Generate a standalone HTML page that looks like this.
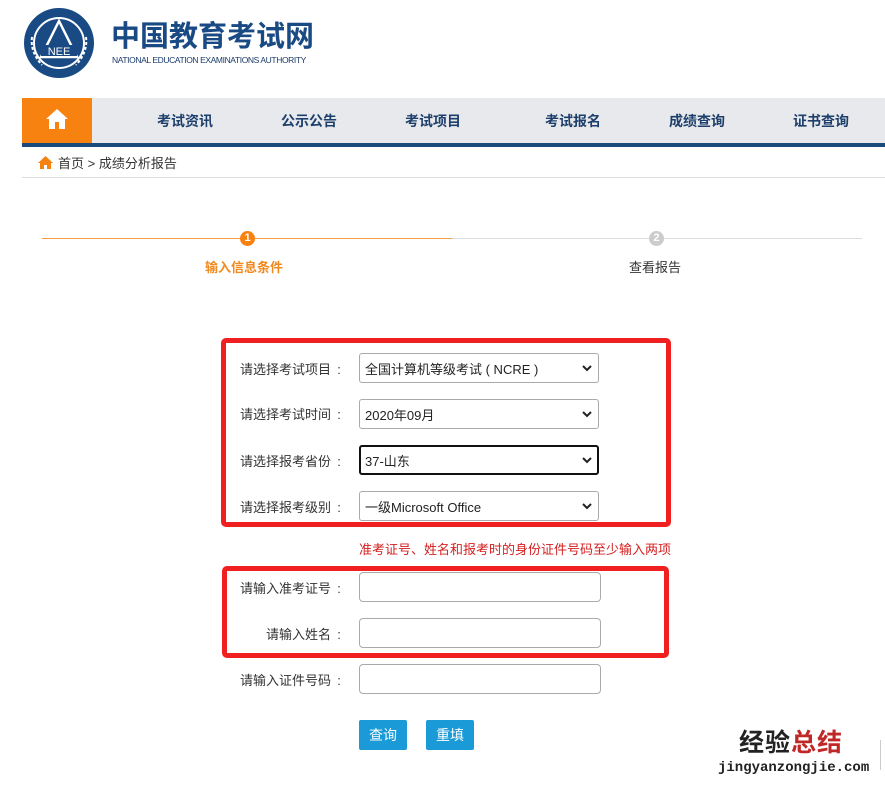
<!DOCTYPE html>
<html><head><meta charset="utf-8"><style>
body{margin:0;width:885px;height:787px;background:#fff;position:relative;overflow:hidden;font-family:"Liberation Sans","Noto Sans CJK SC",sans-serif;font-size:13px;color:#333}
.a{position:absolute}
.k{display:inline-block;width:16px;text-align:center}
.nav{left:22px;top:98px;width:863px;height:45px;background:#e8e9ec;border-bottom:4px solid #1b4a7c}
.nav span{position:absolute;top:13px;font-size:14px;font-weight:bold;color:#1d3f6c;transform:translateX(-50%)}
.lbl{position:absolute;left:200px;width:147px;text-align:right;font-size:13px;color:#333}
.sel{position:absolute;left:359px;width:238px;height:28px;border:1px solid #aaa;border-radius:3px;background:#fff;box-sizing:content-box}
.sel .t{position:absolute;left:5px;top:5px;font-size:13px;color:#222;white-space:nowrap}
.sel svg{position:absolute;right:6px;top:11px}
.inp{position:absolute;left:359px;width:240px;height:28px;border:1px solid #aaa;border-radius:4px}
.btn{position:absolute;top:720px;width:48px;height:30px;background:#1a9ad6;color:#fff;border-radius:2px;text-align:center;line-height:30px;font-size:14px}
.red{position:absolute;border:5px solid #f02020;border-radius:5px}
</style></head><body>
<svg class="a" style="left:22px;top:7px" width="74" height="72" viewBox="0 0 74 72">
<circle cx="37" cy="36" r="35" fill="#1a4a84"/><circle cx="37" cy="36" r="25" fill="none" stroke="#fff" stroke-width="2"/>
<path d="M37 14 L55 50 L19 50 Z" fill="none" stroke="#fff" stroke-width="2.5"/>
<rect x="19" y="38" width="36" height="11" fill="#1a4a84"/>
<text x="37" y="48" fill="#fff" font-size="11" text-anchor="middle" font-family="Liberation Sans">NEE</text>
<path d="M10 30 Q8 45 20 58 M64 30 Q66 45 54 58" stroke="#fff" stroke-width="2" fill="none" stroke-dasharray="3 2"/></svg>
<div class="a" style="left:111px;top:23px;font-size:29px;line-height:1;font-weight:bold;color:#1a4a84">中国教育考试网</div>
<div class="a" style="left:112px;top:56px;font-size:8.5px;line-height:1;color:#1a3a6a;letter-spacing:-0.4px;white-space:nowrap">NATIONAL EDUCATION EXAMINATIONS AUTHORITY</div>
<div class="a nav">
<div class="a" style="left:0;top:0;width:70px;height:45px;background:#f7820f"></div>
<svg class="a" style="left:23px;top:10px" width="24" height="22" viewBox="0 0 24 22"><path d="M12 1 L1 11 L4 11 L4 21 L10 21 L10 14 L14 14 L14 21 L20 21 L20 11 L23 11 Z" fill="#fff"/></svg>
<span style="left:163px">考试资讯</span><span style="left:287px">公示公告</span><span style="left:411px">考试项目</span><span style="left:551px">考试报名</span><span style="left:675px">成绩查询</span><span style="left:799px">证书查询</span>
</div>
<svg class="a" style="left:37px;top:155px" width="17" height="15" viewBox="0 0 17 15"><path d="M8.5 1 L1 8 L3 8 L3 14 L7 14 L7 10 L10 10 L10 14 L14 14 L14 8 L16 8 Z" fill="#f7820f"/></svg>
<div class="a" style="left:58px;top:153px;font-size:13px;color:#333">首页 &gt; 成绩分析报告</div>
<div class="a" style="left:22px;top:177px;width:863px;height:1px;background:#ddd"></div>
<div class="a" style="left:42px;top:238px;width:410px;height:1px;background:#f0a040"></div>
<div class="a" style="left:452px;top:238px;width:410px;height:1px;background:#ddd"></div>
<div class="a" style="left:240px;top:231px;width:15px;height:15px;border-radius:50%;background:#f7820f;color:#fff;font-size:11px;text-align:center;line-height:15px;font-weight:bold">1</div>
<div class="a" style="left:649px;top:231px;width:15px;height:15px;border-radius:50%;background:#ccc;color:#fff;font-size:11px;text-align:center;line-height:15px;font-weight:bold">2</div>
<div class="a" style="left:205px;top:257px;font-size:13px;color:#f08a20;font-weight:bold">输入信息条件</div>
<div class="a" style="left:629px;top:257px;font-size:13px;color:#333">查看报告</div>
<div class="red" style="left:221px;top:338px;width:440px;height:179px"></div>
<div class="lbl" style="top:359px">请选择考试项目<span class="k">:</span></div>
<div class="lbl" style="top:404px">请选择考试时间<span class="k">:</span></div>
<div class="lbl" style="top:451px">请选择报考省份<span class="k">:</span></div>
<div class="lbl" style="top:497px">请选择报考级别<span class="k">:</span></div>
<div class="sel" style="top:353px"><div class="t">全国计算机等级考试 ( NCRE )</div><svg width="10" height="7"><path d="M1 1 L5 5 L9 1" stroke="#222" stroke-width="2" fill="none"/></svg></div>
<div class="sel" style="top:399px"><div class="t">2020年09月</div><svg width="10" height="7"><path d="M1 1 L5 5 L9 1" stroke="#222" stroke-width="2" fill="none"/></svg></div>
<div class="sel" style="top:445px;border:2px solid #111;width:236px;height:26px"><div class="t" style="left:4px;top:4px">37-山东</div><svg width="10" height="7" style="top:10px;right:5px"><path d="M1 1 L5 5 L9 1" stroke="#222" stroke-width="2" fill="none"/></svg></div>
<div class="sel" style="top:491px"><div class="t">一级Microsoft Office</div><svg width="10" height="7"><path d="M1 1 L5 5 L9 1" stroke="#222" stroke-width="2" fill="none"/></svg></div>
<div class="a" style="left:359px;top:539px;font-size:13px;color:#d42020">准考证号、姓名和报考时的身份证件号码至少输入两项</div>
<div class="red" style="left:222px;top:566px;width:437px;height:82px"></div>
<div class="lbl" style="top:578px">请输入准考证号<span class="k">:</span></div>
<div class="lbl" style="top:624px">请输入姓名<span class="k">:</span></div>
<div class="lbl" style="top:670px">请输入证件号码<span class="k">:</span></div>
<div class="inp" style="top:572px"></div><div class="inp" style="top:618px"></div><div class="inp" style="top:664px"></div>
<div class="btn" style="left:359px">查询</div><div class="btn" style="left:426px">重填</div>
<div class="a" style="left:739px;top:731px;font-size:25px;line-height:1;font-weight:bold;color:#222;letter-spacing:1px">经验<span style="color:#c02828">总结</span></div>
<div class="a" style="left:718px;top:761px;font-size:14px;line-height:1;font-family:'Liberation Mono',monospace;color:#222;font-weight:bold">jingyanzongjie.com</div>
<div class="a" style="left:880px;top:740px;width:1px;height:30px;background:#ccc"></div>
</body></html>
